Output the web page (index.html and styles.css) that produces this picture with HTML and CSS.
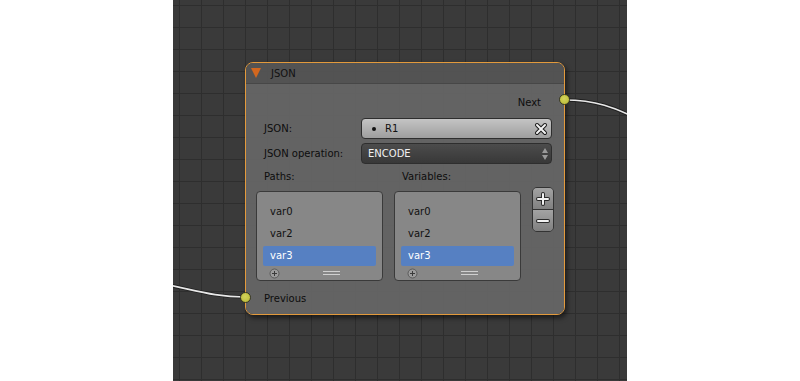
FILE: index.html
```html
<!DOCTYPE html>
<html>
<head>
<meta charset="utf-8">
<link rel="stylesheet" href="styles.css">
</head>
<body>
<div class="page">
  <div class="canvas">
    <svg class="wires" width="454" height="381" viewBox="0 0 454 381">
      <path class="wire-outline" d="M -60 276 C 10 284, 30 297, 72 297"/>
      <path class="wire" d="M -60 276 C 10 284, 30 297, 72 297"/>
      <path class="wire-outline" d="M 391 100 C 420 100, 440 105, 480 127"/>
      <path class="wire" d="M 391 100 C 420 100, 440 105, 480 127"/>
    </svg>
    <div class="node">
      <div class="node-header">
        <span class="collapse-tri"></span>
        <span class="node-title">JSON</span>
      </div>
      <div class="node-body">
        <div class="out-row">
          <span>Next</span>
          <span class="socket socket-out"></span>
        </div>
        <div class="prop-row">
          <span class="prop-label">JSON:</span>
          <div class="field field-text">
            <span class="bullet"></span>
            <span class="field-value">R1</span>
            <svg class="clear-icon" width="14" height="14" viewBox="0 0 14 14">
              <path d="M3 3 L11 11 M11 3 L3 11" stroke="#1a1a1a" stroke-width="4" stroke-linecap="round"/>
              <path d="M3 3 L11 11 M11 3 L3 11" stroke="#f4f4f4" stroke-width="2" stroke-linecap="round"/>
            </svg>
          </div>
        </div>
        <div class="prop-row">
          <span class="prop-label">JSON operation:</span>
          <div class="field field-menu">
            <span class="field-value">ENCODE</span>
            <svg class="updown" width="8" height="16" viewBox="0 0 8 16">
              <path d="M4 2 L7 7 L1 7 Z" fill="#9a9a9a"/>
              <path d="M4 14 L7 9 L1 9 Z" fill="#9a9a9a"/>
            </svg>
          </div>
        </div>
        <div class="lists-row">
          <div class="list-col">
            <div class="list-title">Paths:</div>
            <div class="list">
              <div class="list-item">var0</div>
              <div class="list-item">var2</div>
              <div class="list-item selected">var3</div>
              <div class="list-footer">
                <svg class="add-circle" width="11" height="11" viewBox="0 0 11 11">
                  <circle cx="5.5" cy="5.5" r="4.5" fill="#9c9c9c" stroke="#5a5a5a" stroke-width="1"/>
                  <path d="M5.5 3 V8 M3 5.5 H8" stroke="#3a3a3a" stroke-width="1"/>
                </svg>
                <span class="grip"></span>
              </div>
            </div>
          </div>
          <div class="list-col">
            <div class="list-title">Variables:</div>
            <div class="list">
              <div class="list-item">var0</div>
              <div class="list-item">var2</div>
              <div class="list-item selected">var3</div>
              <div class="list-footer">
                <svg class="add-circle" width="11" height="11" viewBox="0 0 11 11">
                  <circle cx="5.5" cy="5.5" r="4.5" fill="#9c9c9c" stroke="#5a5a5a" stroke-width="1"/>
                  <path d="M5.5 3 V8 M3 5.5 H8" stroke="#3a3a3a" stroke-width="1"/>
                </svg>
                <span class="grip"></span>
              </div>
            </div>
          </div>
          <div class="list-buttons">
            <div class="lbtn lbtn-top">
              <svg width="14" height="14" viewBox="0 0 14 14">
                <path d="M7 2 V12 M2 7 H12" stroke="#2a2a2a" stroke-width="4" stroke-linecap="round"/>
                <path d="M7 2 V12 M2 7 H12" stroke="#f2f2f2" stroke-width="2" stroke-linecap="round"/>
              </svg>
            </div>
            <div class="lbtn lbtn-bottom">
              <svg width="14" height="14" viewBox="0 0 14 14">
                <path d="M2 7 H12" stroke="#2a2a2a" stroke-width="4" stroke-linecap="round"/>
                <path d="M2 7 H12" stroke="#f2f2f2" stroke-width="2" stroke-linecap="round"/>
              </svg>
            </div>
          </div>
        </div>
        <div class="in-row">
          <span class="socket socket-in"></span>
          <span>Previous</span>
        </div>
      </div>
    </div>
  </div>
</div>
</body>
</html>
```

FILE: styles.css
```css
html, body {
  margin: 0;
  padding: 0;
  background: #ffffff;
  font-family: "DejaVu Sans", "Liberation Sans", sans-serif;
  font-size: 10px;
}

.page {
  display: flex;
  width: 800px;
  height: 381px;
}

.canvas {
  position: relative;
  margin-left: 173px;
  width: 454px;
  height: 381px;
  overflow: hidden;
  background-color: #3a3a3a;
  background-image:
    linear-gradient(to right, #2e2e2e 1px, transparent 1px),
    linear-gradient(to bottom, #2e2e2e 1px, transparent 1px);
  background-size: 22px 22px;
  background-position: 6px 5px;
}

.wires {
  position: absolute;
  left: 0;
  top: 0;
}

.wire-outline {
  fill: none;
  stroke: #202020;
  stroke-width: 3.5;
}

.wire {
  fill: none;
  stroke: #e8e8e8;
  stroke-width: 1.6;
}

.node {
  position: absolute;
  left: 72px;
  top: 62px;
  width: 318px;
  height: 251px;
  border: 1px solid #e39a3c;
  border-radius: 8px;
  box-shadow: 2px 3px 5px rgba(0, 0, 0, 0.55);
  display: flex;
  flex-direction: column;
  color: #0d0d0d;
}

.node-header {
  height: 20px;
  display: flex;
  align-items: center;
  background: rgba(86, 86, 86, 0.92);
  border-radius: 7px 7px 0 0;
  border-bottom: 1px solid rgba(70, 70, 70, 0.9);
  padding-left: 5px;
}

.collapse-tri {
  width: 0;
  height: 0;
  border-left: 5px solid transparent;
  border-right: 5px solid transparent;
  border-top: 10px solid #d2671f;
  margin-right: 10px;
}

.node-title {
  color: #111;
}

.node-body {
  flex: 1;
  background: rgba(104, 104, 104, 0.9);
  border-radius: 0 0 7px 7px;
  padding-top: 9px;
  display: flex;
  flex-direction: column;
}

.out-row {
  position: relative;
  height: 18px;
  display: flex;
  align-items: center;
  justify-content: flex-end;
  padding-right: 23px;
}

.in-row {
  position: relative;
  height: 18px;
  display: flex;
  align-items: center;
  padding-left: 18px;
  margin-top: 8px;
}

.socket {
  position: absolute;
  width: 9px;
  height: 9px;
  border-radius: 50%;
  background: radial-gradient(circle at 45% 40%, #d4d45a, #b7b735);
  border: 1px solid #3a3a20;
}

.socket-out {
  right: -6px;
  top: 1px;
}

.socket-in {
  left: -6px;
  top: 3px;
}

.prop-row {
  display: flex;
  align-items: center;
  height: 21px;
  padding-left: 18px;
  padding-right: 12px;
  margin-top: 7px;
}

.prop-row + .prop-row {
  margin-top: 4px;
}

.prop-label {
  width: 97px;
  flex-shrink: 0;
}

.field {
  flex: 1;
  height: 21px;
  border-radius: 4px;
  border: 1px solid #2e2e2e;
  display: flex;
  align-items: center;
  box-sizing: border-box;
}

.field-text {
  background: linear-gradient(to bottom, #c4c4c4, #9e9e9e);
  color: #111;
  padding-left: 10px;
  padding-right: 3px;
}

.bullet {
  width: 4px;
  height: 4px;
  border-radius: 50%;
  background: #111;
  margin-right: 9px;
}

.field-value {
  flex: 1;
}

.clear-icon {
  display: block;
}

.field-menu {
  background: linear-gradient(to bottom, #4c4c4c, #383838);
  color: #f0f0f0;
  padding-left: 6px;
  padding-right: 2px;
}

.updown {
  display: block;
}

.lists-row {
  display: flex;
  align-items: flex-start;
  padding-left: 10px;
  margin-top: 6px;
  gap: 11px;
}

.list-col {
  width: 127px;
  display: flex;
  flex-direction: column;
}

.list-title {
  height: 14px;
  line-height: 14px;
  padding-left: 8px;
  margin-bottom: 7px;
}

.list {
  height: 90px;
  box-sizing: border-box;
  border: 1px solid #3a3a3a;
  border-radius: 4px;
  background: #878787;
  padding: 10px 6px 0 6px;
  display: flex;
  flex-direction: column;
  gap: 2px;
}

.list-item {
  height: 20px;
  line-height: 20px;
  padding-left: 7px;
  border-radius: 2px;
  color: #111;
}

.list-item.selected {
  background: #5680c2;
  color: #ffffff;
}

.list-footer {
  position: relative;
  height: 10px;
  display: flex;
  align-items: center;
}

.add-circle {
  display: block;
  margin-left: 6px;
}

.grip {
  margin-left: 43px;
  width: 17px;
  height: 2px;
  border-top: 1px solid #d0d0d0;
  border-bottom: 1px solid #d0d0d0;
}

.list-buttons {
  margin-top: 17px;
  width: 20px;
  display: flex;
  flex-direction: column;
  border: 1px solid #333;
  border-radius: 5px;
  overflow: hidden;
}

.lbtn {
  height: 21px;
  display: flex;
  align-items: center;
  justify-content: center;
  background: linear-gradient(to bottom, #a3a3a3, #808080);
}

.lbtn-top {
  border-bottom: 1px solid #333;
}

.lbtn svg {
  display: block;
}
```
